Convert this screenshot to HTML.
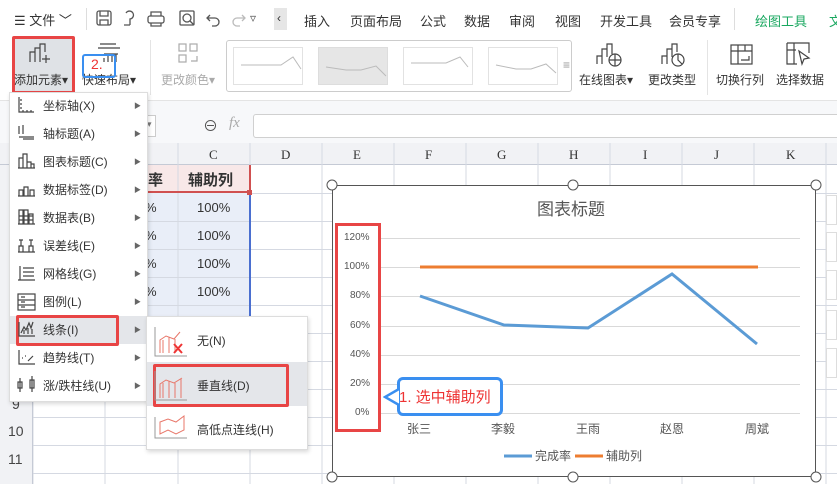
<!DOCTYPE html><html><head><meta charset="utf-8"><style>
*{margin:0;padding:0;box-sizing:border-box}
body{width:837px;height:484px;overflow:hidden;background:#fff;font-family:"Liberation Sans","Noto Sans CJK SC",sans-serif;font-size:12px;color:#333;position:relative}
.a{position:absolute}
.t{position:absolute;white-space:nowrap}
</style></head><body>
<!-- top bar -->
<div class="t" style="left:14px;top:10px;font-size:13px">☰ 文件 ﹀</div>
<div class="a" style="left:86px;top:8px;width:1px;height:22px;background:#ddd"></div>
<svg class="a" style="left:96px;top:9px" width="170" height="20" fill="none" stroke="#555" stroke-width="1.3">
<rect x="1" y="2" width="14" height="14" rx="2"/><path d="M4 2v5h8V2M4 16v-5h8v5"/>
<path d="M30 4a4 4 0 1 1 4 6v6M28 16h6"/>
<rect x="52" y="7" width="16" height="7" rx="2"/><path d="M55 7V3h10v4M55 14v3h10v-3"/>
<rect x="84" y="2" width="14" height="14" rx="1"/><circle cx="91" cy="9" r="4"/><path d="M94 12l4 4"/>
<path d="M114 6l-3 3 3 3M111 9h8a4 4 0 0 1 0 8h-3"/>
<path d="M146 6l3 3-3 3M149 9h-8a4 4 0 0 0 0 8h3" stroke="#bbb"/>
</svg>
<div class="t" style="left:250px;top:11px;color:#555">▿</div>
<div class="a" style="left:274px;top:8px;width:13px;height:22px;background:#e6e6e6"></div>
<div class="t" style="left:277px;top:11px">‹</div>
<div class="t" style="left:304px;top:11px;font-size:13px">插入</div>
<div class="t" style="left:350px;top:11px;font-size:13px">页面布局</div>
<div class="t" style="left:420px;top:11px;font-size:13px">公式</div>
<div class="t" style="left:464px;top:11px;font-size:13px">数据</div>
<div class="t" style="left:509px;top:11px;font-size:13px">审阅</div>
<div class="t" style="left:555px;top:11px;font-size:13px">视图</div>
<div class="t" style="left:600px;top:11px;font-size:13px">开发工具</div>
<div class="t" style="left:669px;top:11px;font-size:13px">会员专享</div>
<div class="a" style="left:734px;top:8px;width:1px;height:22px;background:#ddd"></div>
<div class="t" style="left:755px;top:11px;font-size:13px;color:#1aa860">绘图工具</div>
<div class="t" style="left:829px;top:11px;font-size:13px;color:#1aa860">文</div>
<!-- ribbon -->
<div class="a" style="left:12px;top:36px;width:63px;height:58px;background:#dfe2e6;border:3px solid #e84545;border-radius:2px"></div>
<svg class="a" style="left:28px;top:42px" width="24" height="22" fill="none" stroke="#444" stroke-width="1.2"><path d="M2 20V10h5v10M7 20V6h5v14M12 14V2h5v8M14 17h8M18 13v8"/></svg>
<div class="t" style="left:14px;top:71px;font-size:12px">添加元素▾</div>
<svg class="a" style="left:96px;top:42px" width="26" height="22" fill="none" stroke="#444" stroke-width="1.2"><path d="M4 2h16M2 6h22M8 12h14M8 16v4M12 12v8M16 12v8M20 12v8"/></svg>
<div class="t" style="left:82px;top:71px;font-size:12px">快速布局▾</div>
<div class="a" style="left:82px;top:54px;width:34px;height:24px;border:2px solid #3a8ff0;border-radius:3px"></div>
<div class="t" style="left:91px;top:56px;font-size:14px;color:#e33">2.</div>
<div class="a" style="left:150px;top:40px;width:1px;height:55px;background:#e4e4e4"></div>
<svg class="a" style="left:178px;top:43px" width="22" height="22" fill="none" stroke="#aaa" stroke-width="1.2"><rect x="1" y="1" width="7" height="7"/><rect x="12" y="1" width="7" height="7"/><rect x="1" y="12" width="7" height="7"/><path d="M13 18h6v-5"/></svg>
<div class="t" style="left:161px;top:71px;color:#aaa">更改颜色▾</div>
<div class="a" style="left:226px;top:40px;width:346px;height:52px;border:1px solid #ccc;border-radius:3px;background:#fff"></div>
<div class="a" style="left:233px;top:47px;width:70px;height:38px;border:1px solid #e2e2e2"></div>
<div class="a" style="left:318px;top:47px;width:70px;height:38px;background:#e6e6e6;border:1px solid #ddd"></div>
<div class="a" style="left:403px;top:47px;width:70px;height:38px;border:1px solid #e2e2e2"></div>
<div class="a" style="left:488px;top:47px;width:70px;height:38px;border:1px solid #e2e2e2"></div>
<svg class="a" style="left:233px;top:47px" width="330" height="38" fill="none" stroke="#bbb"><path d="M8 18l20 0 20 0 12-8 8 12M93 20l20 3 15 0 15-4 10 10M178 16l20 0 15 0 14-6 8 10M263 18l20 4 15 0 15-5 10 9"/></svg>
<div class="t" style="left:563px;top:58px;color:#999">≡</div>
<svg class="a" style="left:595px;top:42px" width="28" height="26" fill="none" stroke="#444" stroke-width="1.2"><path d="M2 22v-8h5v8M7 22V7h5v8M12 14V2h5v10"/><circle cx="20" cy="18" r="6"/><path d="M14 18h12M20 12v12"/></svg>
<div class="t" style="left:579px;top:71px">在线图表▾</div>
<svg class="a" style="left:660px;top:42px" width="26" height="26" fill="none" stroke="#444" stroke-width="1.2"><path d="M2 22v-8h5v8M7 22V7h5v8M12 12V2h5v8"/><circle cx="18" cy="18" r="6"/><path d="M18 12v6l4 4"/></svg>
<div class="t" style="left:648px;top:71px">更改类型</div>
<div class="a" style="left:707px;top:40px;width:1px;height:55px;background:#e4e4e4"></div>
<svg class="a" style="left:730px;top:44px" width="24" height="22" fill="none" stroke="#444" stroke-width="1.2"><rect x="1" y="1" width="21" height="19" /><path d="M1 7h21M8 1v19M15 1v6"/><path d="M11 16h8v-4"/></svg>
<div class="t" style="left:716px;top:71px">切换行列</div>
<svg class="a" style="left:786px;top:42px" width="26" height="24" fill="none" stroke="#444" stroke-width="1.2"><path d="M1 1h22v10M1 1v21h10M1 8h9M8 1v21"/><path d="M13 9l10 7-5 1-2 5z"/></svg>
<div class="t" style="left:776px;top:71px">选择数据</div>
<div class="a" style="left:0;top:100px;width:837px;height:1px;background:#e4e4e4"></div>
<!-- formula bar -->
<div class="a" style="left:0;top:101px;width:837px;height:42px;background:#f7f8fa"></div>
<div class="a" style="left:130px;top:115px;width:26px;height:22px;border:1px solid #ccc;background:#fff"></div>
<div class="t" style="left:147px;top:119px;color:#777;font-size:9px">▾</div>
<div class="t" style="left:203px;top:115px;font-size:15px;color:#555">⊖</div>
<div class="t" style="left:229px;top:115px;font-size:15px;color:#aaa;font-style:italic;font-family:'Liberation Serif',serif">fx</div>
<div class="a" style="left:253px;top:114px;width:590px;height:24px;border:1px solid #d0d0d0;border-radius:3px;background:#fff"></div>
<!-- column header -->
<div class="a" style="left:0;top:143px;width:837px;height:22px;background:#f1f2f5;border-bottom:1px solid #c5cad5"></div>
<div class="t" style="left:209px;top:147px;font-size:13px;font-family:'Liberation Serif',serif">C</div>
<div class="t" style="left:281px;top:147px;font-size:13px;font-family:'Liberation Serif',serif">D</div>
<div class="t" style="left:353px;top:147px;font-size:13px;font-family:'Liberation Serif',serif">E</div>
<div class="t" style="left:425px;top:147px;font-size:13px;font-family:'Liberation Serif',serif">F</div>
<div class="t" style="left:497px;top:147px;font-size:13px;font-family:'Liberation Serif',serif">G</div>
<div class="t" style="left:569px;top:147px;font-size:13px;font-family:'Liberation Serif',serif">H</div>
<div class="t" style="left:643px;top:147px;font-size:13px;font-family:'Liberation Serif',serif">I</div>
<div class="t" style="left:714px;top:147px;font-size:13px;font-family:'Liberation Serif',serif">J</div>
<div class="t" style="left:786px;top:147px;font-size:13px;font-family:'Liberation Serif',serif">K</div>
<svg class="a" style="left:0;top:143px" width="837" height="341" stroke="#d5d9e2" stroke-width="1">
<path d="M33 0v341M105 22v319M178 0v341M250 0v341M322 0v341M394 0v341M466 0v341M538 0v341M610 0v341M682 0v341M754 0v341M826 0v341"/>
<path d="M0 50.5h837M0 78.5h837M0 106.5h837M0 134.5h837M0 162.5h837M0 190.5h837M0 218.5h837M0 246.5h837M0 274.5h837M0 302.5h837M0 330.5h837"/>
</svg>
<div class="a" style="left:0;top:165px;width:33px;height:319px;background:#f1f2f5;border-right:1px solid #c5cad5"></div>
<div class="t" style="left:12px;top:396px;font-size:14px;color:#444">9</div>
<div class="t" style="left:8px;top:423px;font-size:14px;color:#444">10</div>
<div class="t" style="left:8px;top:451px;font-size:14px;color:#444">11</div>
<!-- table cells -->
<div class="a" style="left:105px;top:165px;width:146px;height:28px;background:#f8e8e8"></div>
<div class="a" style="left:105px;top:193px;width:146px;height:140px;background:#e9eef8"></div>
<svg class="a" style="left:105px;top:165px" width="150" height="170" stroke="#d5d9e2"><path d="M73 0v170M0 56.5h150M0 84.5h150M0 112.5h150M0 140.5h150"/></svg>
<div class="a" style="left:105px;top:191px;width:146px;height:2px;background:#d05050"></div>
<div class="a" style="left:249px;top:165px;width:2px;height:28px;background:#d05050"></div>
<div class="a" style="left:249px;top:193px;width:2px;height:140px;background:#4a6fd0"></div>
<div class="a" style="left:247px;top:190px;width:5px;height:5px;background:#d05050"></div>
<div class="t" style="left:148px;top:169px;font-size:15px;font-weight:bold">率</div>
<div class="t" style="left:188px;top:169px;font-size:15px;font-weight:bold">辅助列</div>
<div class="t" style="left:145px;top:200px;font-size:13px">%</div><div class="t" style="left:197px;top:200px;font-size:13px">100%</div>
<div class="t" style="left:145px;top:228px;font-size:13px">%</div><div class="t" style="left:197px;top:228px;font-size:13px">100%</div>
<div class="t" style="left:145px;top:256px;font-size:13px">%</div><div class="t" style="left:197px;top:256px;font-size:13px">100%</div>
<div class="t" style="left:145px;top:284px;font-size:13px">%</div><div class="t" style="left:197px;top:284px;font-size:13px">100%</div>
<!-- right side tools -->
<div class="a" style="left:826px;top:195px;width:11px;height:30px;background:#fff;border:1px solid #ddd"></div>
<div class="a" style="left:826px;top:232px;width:11px;height:30px;background:#fff;border:1px solid #ddd"></div>
<div class="a" style="left:826px;top:270px;width:11px;height:30px;background:#fff;border:1px solid #ddd"></div>
<div class="a" style="left:826px;top:310px;width:11px;height:30px;background:#fff;border:1px solid #ddd"></div>
<div class="a" style="left:826px;top:348px;width:11px;height:30px;background:#fff;border:1px solid #ddd"></div>
<!-- chart -->
<div class="a" style="left:332px;top:185px;width:484px;height:292px;background:#fff;border:1px solid #555"></div>
<svg class="a" style="left:320px;top:140px" width="517" height="344">
<g stroke="#d9d9d9"><path d="M60 98.5h420M60 127.5h420M60 156.5h420M60 186.5h420M60 215.5h420M60 244.5h420M60 273.5h420"/></g>
<path d="M100 127H438" stroke="#ed7d31" stroke-width="3"/>
<path d="M100 156L184 185 268 188 352 134 437 204" fill="none" stroke="#5b9bd5" stroke-width="3"/>
<g fill="#fff" stroke="#555"><circle cx="12" cy="45" r="5"/><circle cx="253" cy="45" r="5"/><circle cx="496" cy="45" r="5"/><circle cx="12" cy="337" r="5"/><circle cx="253" cy="337" r="5"/><circle cx="496" cy="337" r="5"/></g>
<path d="M184 316h28" stroke-width="3" stroke="#5b9bd5"/>
<path d="M255 316h28" stroke-width="3" stroke="#ed7d31"/>
</svg>
<div class="t" style="left:537px;top:195px;font-size:17px;color:#555">图表标题</div>
<div class="a" style="left:335px;top:223px;width:46px;height:209px;border:3px solid #e84545"></div>
<div class="t" style="left:344px;top:232px;font-size:10px;color:#555">120%</div>
<div class="t" style="left:344px;top:261px;font-size:10px;color:#555">100%</div>
<div class="t" style="left:350px;top:290px;font-size:10px;color:#555">80%</div>
<div class="t" style="left:350px;top:320px;font-size:10px;color:#555">60%</div>
<div class="t" style="left:350px;top:349px;font-size:10px;color:#555">40%</div>
<div class="t" style="left:350px;top:378px;font-size:10px;color:#555">20%</div>
<div class="t" style="left:355px;top:407px;font-size:10px;color:#555">0%</div>
<div class="t" style="left:407px;top:420px;font-size:12px;color:#555">张三</div>
<div class="t" style="left:491px;top:420px;font-size:12px;color:#555">李毅</div>
<div class="t" style="left:576px;top:420px;font-size:12px;color:#555">王雨</div>
<div class="t" style="left:660px;top:420px;font-size:12px;color:#555">赵恩</div>
<div class="t" style="left:745px;top:420px;font-size:12px;color:#555">周斌</div>
<div class="t" style="left:535px;top:447px;font-size:12px;color:#555">完成率</div>
<div class="t" style="left:606px;top:447px;font-size:12px;color:#555">辅助列</div>
<div class="a" style="left:397px;top:377px;width:106px;height:39px;border:3px solid #3a8ff0;border-radius:6px;background:#fff"></div>
<svg class="a" style="left:383px;top:387px" width="18" height="20"><path d="M16 2L2 10 16 18" fill="#fff" stroke="#3a8ff0" stroke-width="2.5"/></svg>
<div class="t" style="left:399px;top:386px;font-size:15px;color:#e33">1. 选中辅助列</div>
<!-- menu -->
<div class="a" style="left:9px;top:92px;width:139px;height:310px;background:#fff;border:1px solid #ddd;box-shadow:1px 2px 4px rgba(0,0,0,.15)"></div>
<div class="a" style="left:10px;top:316px;width:137px;height:28px;background:#e4e6ea"></div>
<div class="a" style="left:16px;top:315px;width:103px;height:31px;border:3px solid #e84545;border-radius:2px"></div>
<svg class="a" style="left:17px;top:96px" width="20" height="300" fill="none" stroke="#444" stroke-width="1.2">
<path d="M2 1v15h15M5 4h-2M5 8h-2M5 12h-2M6 16v-2M10 16v-2M14 16v-2"/>
<path d="M2 30v8M6 29v9M2 41h15M6 43h11"/>
<path d="M2 72v-10h4v10M6 72v-14h4v14M10 72v-6h4v6M14 72v-4h3v4M1 72h17"/>
<path d="M2 100v-6h4v6M7 100v-9h4v9M13 100v-6h4v6M1 100h17"/>
<path d="M2 128v-14h4v14M7 128v-14h4v14M12 128v-10h4v10M2 120h14M2 124h14M1 128h17"/>
<path d="M2 156v-6h4v6M12 156v-6h4v6M1 156h17M4 150v-6M14 150v-6M2 144h4M12 144h4"/>
<path d="M3 170v14M1 184h17M6 172h11M6 176h11M6 180h11"/>
<rect x="1" y="198" width="17" height="16"/><path d="M1 204h17M1 209h17M4 201h4M4 206h4M4 211h4"/>
<path d="M2 226v14h16M4 237l3-6 2 3 3-7 2 5 2-6M7 238v-4M11 238v-6M15 238v-5"/>
<path d="M2 254v14h16M5 262h1M8 260h1M11 265l5-5"/>
<path d="M3 282v14M15 280v16M1 286h4v6H1zM13 284h4v8h-4z"/>
</svg>
<div class="t" style="left:43px;top:92px;font-size:12px;line-height:28px;color:#333">坐标轴(X)<br>轴标题(A)<br>图表标题(C)<br>数据标签(D)<br>数据表(B)<br>误差线(E)<br>网格线(G)<br>图例(L)<br>线条(I)<br>趋势线(T)<br>涨/跌柱线(U)</div>
<div class="t" style="left:134px;top:93px;font-size:7px;line-height:28px;color:#666">▶<br>▶<br>▶<br>▶<br>▶<br>▶<br>▶<br>▶<br>▶<br>▶<br>▶</div>
<!-- submenu -->
<div class="a" style="left:146px;top:316px;width:162px;height:134px;background:#fff;border:1px solid #ddd;box-shadow:1px 2px 4px rgba(0,0,0,.15)"></div>
<div class="a" style="left:147px;top:362px;width:160px;height:44px;background:#e4e6ea"></div>
<div class="a" style="left:153px;top:364px;width:136px;height:43px;border:3px solid #e84545;border-radius:2px"></div>
<svg class="a" style="left:154px;top:326px" width="34" height="115" fill="none" stroke-width="1">
<path d="M1 1v29h32M1 45v29h32M1 91v21h32" stroke="#999"/>
<path d="M6 27V14l6-4 8 3 6-7M9 27V14M15 27V11M21 27V13" stroke="#e8776a"/>
<path d="M20 18l8 9M28 18l-8 9" stroke="#e33" stroke-width="2"/>
<path d="M6 72V58l6-4 8 3 8-5M9 72V57M15 72V55M21 72V57M27 72V53" stroke="#e8776a"/>
<path d="M6 108V96l8-3 8 3 8-6v14l-8 4-8-4-8 4z" stroke="#e8776a"/>
</svg>
<div class="t" style="left:197px;top:332px;font-size:12px">无(N)</div>
<div class="t" style="left:197px;top:377px;font-size:12px">垂直线(D)</div>
<div class="t" style="left:197px;top:421px;font-size:12px">高低点连线(H)</div>
</body></html>
